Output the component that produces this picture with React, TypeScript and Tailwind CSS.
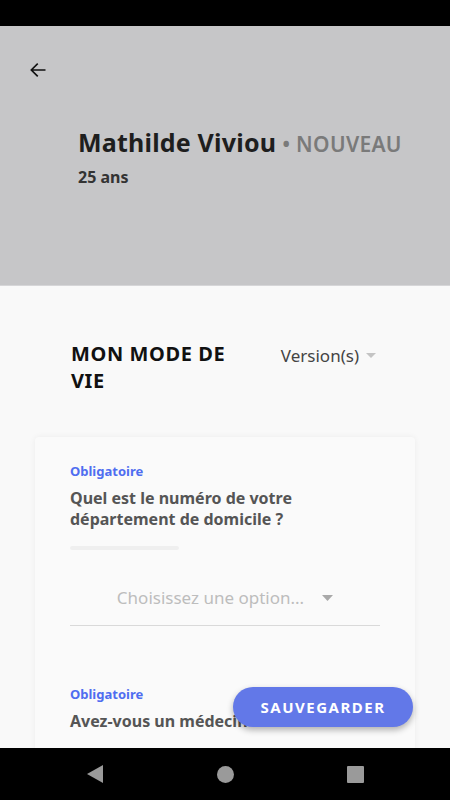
import React from 'react';

const font = { fontFamily: '"Noto Sans", "Open Sans", sans-serif' };

// Une question du formulaire
const Question = ({ label }: { label: string }) => (
  <div>
    <p className="text-[13px] font-bold leading-[18px] text-[#4f6df0]">Obligatoire</p>
    <p className="mt-[8px] text-[16px] font-bold leading-[21px] text-[#555555]">{label}</p>
  </div>
);

const App: React.FC = () => {
  return (
    <div className="relative flex h-[800px] w-[450px] flex-col overflow-hidden bg-[#f9f9f9]" style={font}>
      {/* Status bar */}
      <div className="h-[26px] shrink-0 bg-black" />

      {/* Header */}
      <div className="h-[260px] shrink-0 border-b border-[#d6d6d8] bg-[#c6c6c8] px-[28px] pt-[34px]">
        <svg width="20" height="20" viewBox="0 0 24 24" fill="none" stroke="#111" strokeWidth="2" strokeLinecap="square">
          <path d="M20 12H5M11 5l-7 7 7 7" />
        </svg>
        <div className="ml-[50px] mt-[46px]">
          <div className="flex items-baseline whitespace-nowrap">
            <span className="text-[25px] font-bold leading-[32px] tracking-[0.2px] text-[#1e1e1e]">Mathilde Viviou</span>
            <span className="ml-[6px] text-[21px] font-semibold tracking-[0.3px] text-[#7a7a7a]">• NOUVEAU</span>
          </div>
          <p className="mt-[6px] text-[16px] font-bold leading-[20px] text-[#333333]">25 ans</p>
        </div>
      </div>

      {/* Body */}
      <div className="flex-1 overflow-hidden">
        <div className="flex items-start px-[71px] pt-[54px]">
          <h2 className="w-[180px] text-[20px] font-bold leading-[27px] tracking-[0.6px] text-[#111111]">MON MODE DE VIE</h2>
          <div className="ml-auto mr-[3px] flex items-center gap-[7px] pt-[3px]">
            <span className="text-[17px] text-[#444444]">Version(s)</span>
            <svg width="10" height="6" viewBox="0 0 10 6"><path d="M0 0h10L5 5z" fill="#c4c4c4" /></svg>
          </div>
        </div>

        <div className="mx-[35px] mt-[43px] rounded-[4px] bg-[#fafafa] px-[35px] pt-[25px] shadow-[0_0_6px_rgba(0,0,0,0.06)]">
          <Question label="Quel est le numéro de votre département de domicile ?" />
          <div className="mt-[16px] h-[4px] w-[109px] rounded-full bg-[#efefef]" />
          <div className="mt-[35px] flex items-center justify-center gap-[18px] border-b border-[#d9d9d9] pb-[14px]">
            <span className="text-[17px] text-[#bdbdbd]">Choisissez une option...</span>
            <svg width="11" height="6" viewBox="0 0 11 6"><path d="M0 0h11L5.5 6z" fill="#a9a9a9" /></svg>
          </div>
          <div className="pt-[59px] pb-[40px]">
            <Question label="Avez-vous un médecin traitant ?" />
          </div>
        </div>
      </div>

      {/* Bouton flottant */}
      <button className="absolute left-[233px] top-[687px] h-[40px] w-[180px] rounded-full bg-[#6278e8] text-[15px] font-bold tracking-[1.5px] text-white shadow-[0_3px_6px_rgba(0,0,0,0.3)]">
        SAUVEGARDER
      </button>

      {/* Navigation bar */}
      <div className="flex h-[52px] shrink-0 items-center justify-center gap-[113px] bg-black">
        <svg width="17" height="18" viewBox="0 0 17 18"><path d="M16 0v18L0 9z" fill="#9a9a9a" /></svg>
        <div className="h-[17px] w-[17px] rounded-full bg-[#9a9a9a]" />
        <div className="h-[17px] w-[17px] rounded-[1px] bg-[#9a9a9a]" />
      </div>
    </div>
  );
};

export default App;
